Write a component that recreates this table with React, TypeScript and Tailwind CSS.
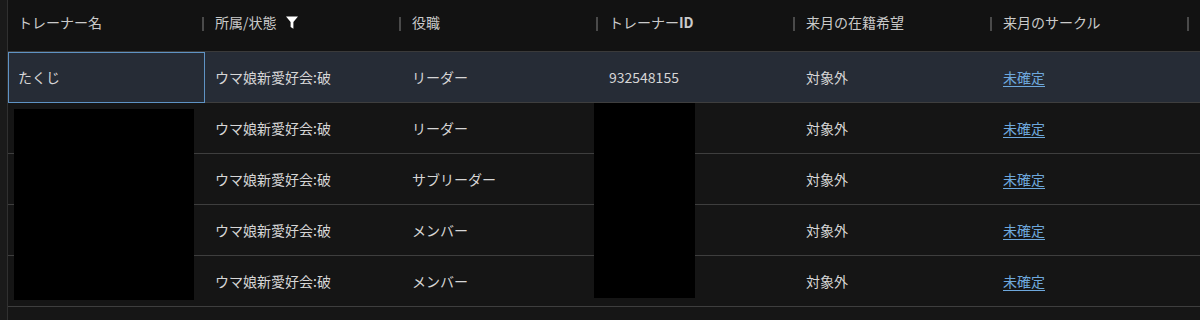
import React from "react";

const rows = [
  { name: "たくじ", org: "ウマ娘新愛好会:破", role: "リーダー", id: "932548155", wish: "対象外", circle: "未確定", selected: true },
  { name: "", org: "ウマ娘新愛好会:破", role: "リーダー", id: "", wish: "対象外", circle: "未確定" },
  { name: "", org: "ウマ娘新愛好会:破", role: "サブリーダー", id: "", wish: "対象外", circle: "未確定" },
  { name: "", org: "ウマ娘新愛好会:破", role: "メンバー", id: "", wish: "対象外", circle: "未確定" },
  { name: "", org: "ウマ娘新愛好会:破", role: "メンバー", id: "", wish: "対象外", circle: "未確定" },
];

function Funnel() {
  return (
    <svg width="12" height="13" viewBox="0 0 12 13" className="ml-[9px]">
      <path d="M0 0.5 H12 L7.4 6 V12.8 L4.6 11 V6 Z" fill="#ffffff" />
    </svg>
  );
}

function HeadCell({ children }: { children: React.ReactNode }) {
  return (
    <div className="w-[197px] shrink-0 h-full flex items-start justify-between pl-[10px] pt-[12px]">
      <div className="flex items-center h-[20px]">{children}</div>
      <div className="w-[2px] h-[14px] mt-[5px] mr-[1px] bg-[#4a4a4a]" />
    </div>
  );
}

function Cell({ children }: { children?: React.ReactNode }) {
  return <div className="w-[197px] shrink-0 h-full flex items-center pl-[10px]">{children}</div>;
}

export default function App() {
  return (
    <div
      className="w-[1200px] h-[320px] flex bg-[#1a1a1a] overflow-hidden text-[14px]"
      style={{ fontFamily: '"Noto Sans CJK JP", "Noto Sans", Roboto, sans-serif' }}
    >
      <div className="w-[7px] shrink-0 bg-[#1a1a1a]" />
      <div className="w-px shrink-0 bg-[#303030]" />
      <div className="flex-1 relative bg-[#151515] flex flex-col">
        <div className="h-[52px] shrink-0 flex bg-[#121212] border-b border-[#3a3a3a] text-[#cacaca]">
          <HeadCell>トレーナー名</HeadCell>
          <HeadCell>
            所属/状態
            <Funnel />
          </HeadCell>
          <HeadCell>役職</HeadCell>
          <HeadCell>
            トレーナー<span className="font-semibold">ID</span>
          </HeadCell>
          <HeadCell>来月の在籍希望</HeadCell>
          <HeadCell>来月のサークル</HeadCell>
        </div>
        {rows.map((r, i) => (
          <div
            key={i}
            className={`relative h-[51px] shrink-0 flex border-b border-[#3e3e3e] text-[#d6d6d6] ${
              r.selected ? "bg-[#262c36]" : "bg-[#151515]"
            }`}
          >
            <Cell>{r.name}</Cell>
            <Cell>{r.org}</Cell>
            <Cell>{r.role}</Cell>
            <Cell>{r.id}</Cell>
            <Cell>{r.wish}</Cell>
            <Cell>
              <span className="text-[#6ea8dc] underline underline-offset-[3px]">{r.circle}</span>
            </Cell>
            {r.selected && (
              <div className="absolute left-0 top-0 w-[197px] h-[51px] border border-[#5f93c4]" />
            )}
          </div>
        ))}
        <div className="flex-1 bg-[#161616]" />
        <div className="absolute left-[6px] top-[109px] w-[180px] h-[191px] bg-black" />
        <div className="absolute left-[586px] top-[103px] w-[101px] h-[195px] bg-black" />
      </div>
    </div>
  );
}
